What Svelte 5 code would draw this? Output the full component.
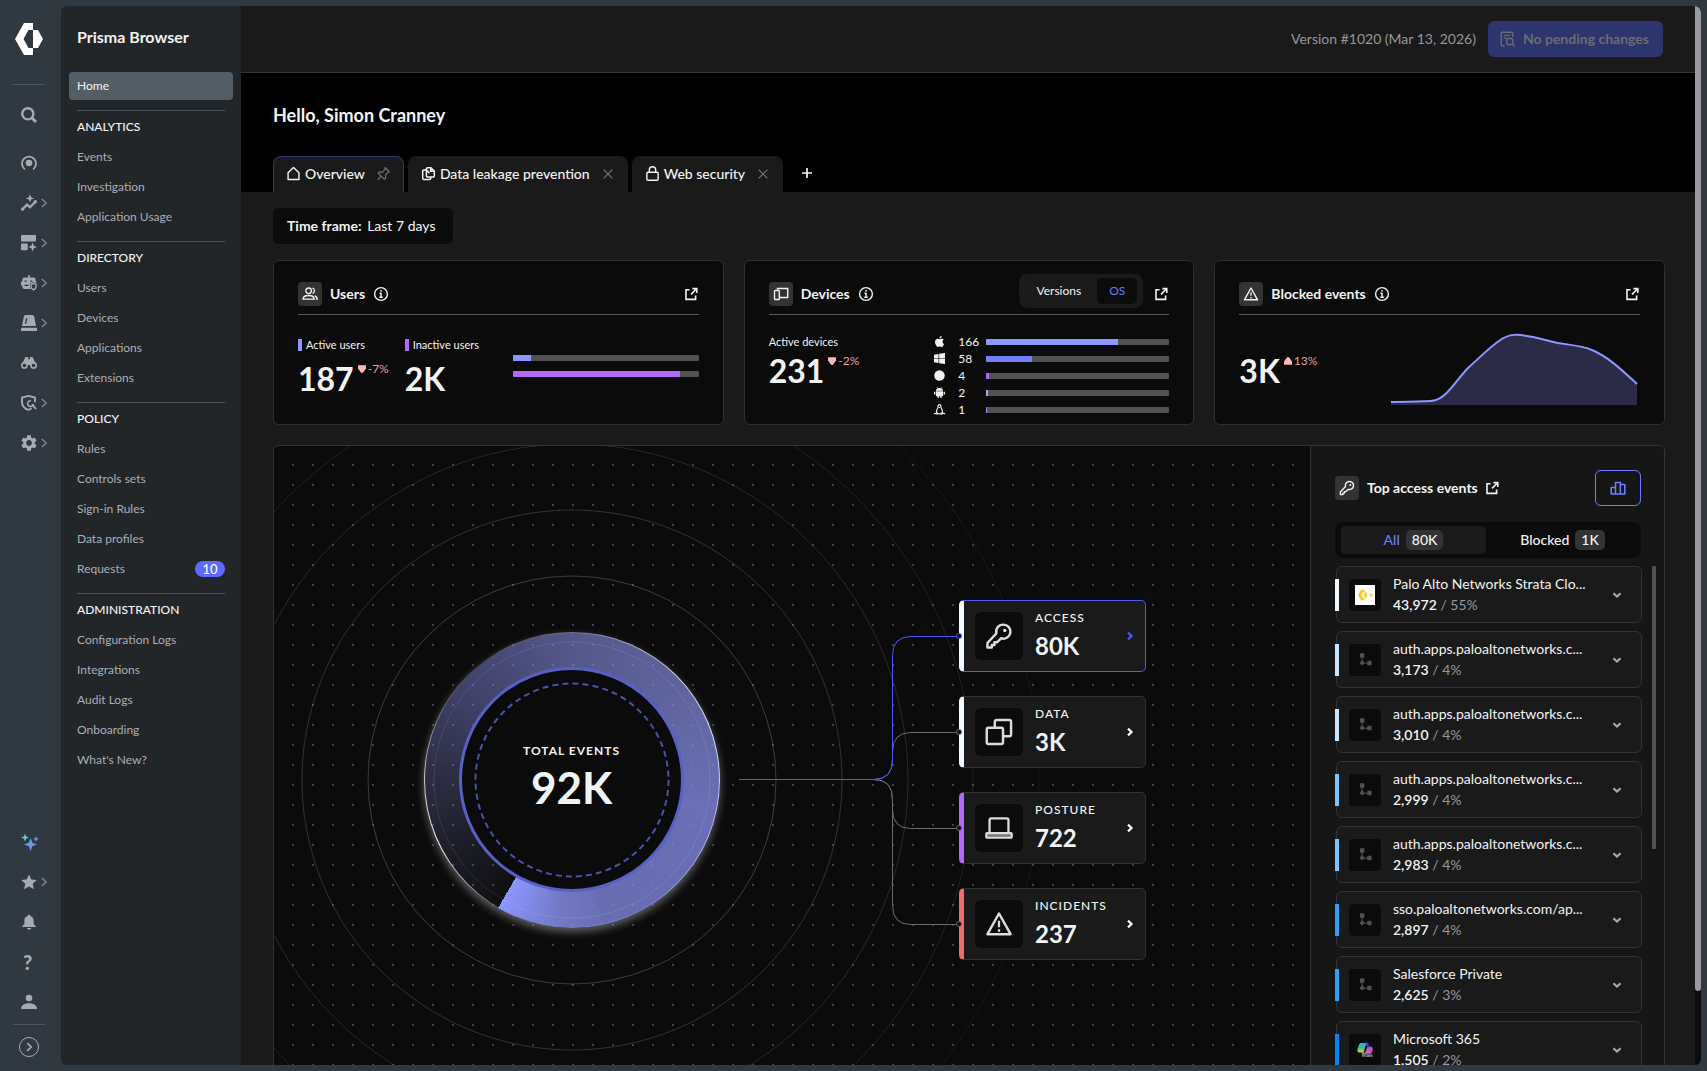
<script lang="ts">
	type NavSection = { title: string; items: { label: string; badge?: number }[] };
	type EventRow = { name: string; count: string; share: string; color: string; logo: string };

	const star = (x: number, y: number, r: number) =>
		`M${x} ${y - r}L${x + r * 0.28} ${y - r * 0.28}L${x + r} ${y}L${x + r * 0.28} ${y + r * 0.28}L${x} ${y + r}L${x - r * 0.28} ${y + r * 0.28}L${x - r} ${y}L${x - r * 0.28} ${y - r * 0.28}Z`;

	// all icons live on a 16x16 grid
	const icons: Record<string, string> = {
		search: '<circle cx="6.8" cy="6.8" r="5.6" fill="none" stroke="currentColor" stroke-width="2.4"/><path d="M11 11l4 4" stroke="currentColor" stroke-width="3"/>',
		target: '<path d="M3.8 14.2A7 7 0 1 1 12.2 14.2" fill="none" stroke="currentColor" stroke-width="1.9"/><circle cx="8" cy="8" r="3.3"/>',
		insights: `<path d="M1.5 14.3L6 9.6l3 2.6 5.4-5.4" fill="none" stroke="currentColor" stroke-width="2.3"/><circle cx="1.6" cy="14.2" r="1.6"/><circle cx="14.3" cy="6.8" r="1.7"/><path d="${star(9, 3.4, 4.2)}"/>`,
		dashboard: `<rect x="0" y="0" width="15" height="6.4" rx="1"/><rect x="0" y="8.4" width="6.8" height="6.8" rx="1"/><path d="${star(11.6, 12, 4.4)}"/>`,
		robot: '<path d="M8 0v3" stroke="currentColor" stroke-width="1.6"/><path d="M3.4 2.6h9.2A2 2 0 0 1 14.600 4.600V6h.6v2.200L12.500 7 9 8.500V11c0 1.200.4 2.200 1 3H3.400a2 2 0 0 1-2-2v-1.600H0V6.600h1.400v-2a2 2 0 0 1 2-2zM3.600 5.400v1.400h2.200V5.400zM9.200 5.400v1.400h2.200V5.400zM3.600 9.800v1.300h4V9.800z" fill-rule="evenodd"/><path d="M12.600 8.300l2.500 1v2c0 1.700-1 2.900-2.500 3.500-1.500-.6-2.500-1.800-2.500-3.500v-2z" fill="none" stroke="currentColor" stroke-width="1.300"/>',
		siren: '<path d="M4.600 0h6.400c1.300 0 2 .8 2.300 1.900L15 11H1l1.700-9.100C3 .8 3.500 0 4.600 0zM5 3.200L3.900 9h1.300l1.200-5.800z" fill-rule="evenodd"/><rect x="0" y="12.800" width="16" height="3.200" rx=".6"/>',
		binoculars: '<path d="M4.400 2h2.700v2.300h1.800V2h2.700l3.300 7-2.600-.7L9.800 10H6.200L3.700 8.300 1.100 9z"/><circle cx="3.400" cy="10.400" r="2.600" fill="none" stroke="currentColor" stroke-width="1.600"/><circle cx="12.600" cy="10.400" r="2.600" fill="none" stroke="currentColor" stroke-width="1.600"/>',
		shield: '<path d="M7.600 15C3.600 13.600 1 11 1 7V2.600L7.500.9 14 2.600v4.600" fill="none" stroke="currentColor" stroke-width="1.900"/><path d="M10 5.700A2.900 2.900 0 1 0 12.400 9" fill="none" stroke="currentColor" stroke-width="1.500"/><path d="M11 9.300l4 4.700M7.600 15l3-1.800" stroke="currentColor" stroke-width="1.900"/>',
		gear: '<path transform="translate(-1.600 -1.600) scale(.8)" d="M19.14 12.94c.04-.3.06-.61.06-.94 0-.32-.02-.64-.07-.94l2.03-1.58c.18-.14.23-.41.12-.61l-1.92-3.32c-.12-.22-.37-.29-.59-.22l-2.39.96c-.5-.38-1.030-.7-1.620-.94l-.36-2.540c-.04-.24-.24-.41-.48-.41h-3.840c-.24 0-.43.17-.47.41l-.36 2.540c-.59.24-1.130.57-1.620.94l-2.390-.96c-.22-.08-.47 0-.59.22L2.740 8.870c-.12.21-.08.47.12.61l2.030 1.580c-.05.3-.09.63-.09.94s.02.64.07.94l-2.030 1.580c-.18.14-.23.41-.12.61l1.920 3.320c.12.22.37.29.59.22l2.390-.96c.5.38 1.030.7 1.620.94l.36 2.540c.05.24.24.41.48.41h3.840c.24 0 .44-.17.47-.41l.36-2.540c.59-.24 1.130-.56 1.620-.94l2.390.96c.22.08.47 0 .59-.22l1.920-3.320c.12-.22.07-.47-.12-.61zM12 15.600c-1.980 0-3.600-1.620-3.600-3.600s1.620-3.600 3.600-3.600 3.600 1.620 3.600 3.600-1.620 3.600-3.600 3.600z"/>',
		sparkles: `<defs><linearGradient id="spark" x1="0" x2="1" y1="0" y2="1"><stop offset="0" stop-color="#3fc8f4"/><stop offset="1" stop-color="#8f6be8"/></linearGradient></defs><path fill="#4fc9f0" d="${star(4, 3.6, 4)}"/><path fill="#7c8cf0" d="${star(15, 5, 3)}"/><path fill="url(#spark)" d="${star(9.600, 10.500, 6.400)}"/>`,
		star: '<path d="M8 .4l2.300 5 5.500.6-4.100 3.700 1.200 5.500L8 12.400l-4.900 2.800 1.200-5.500L.2 6l5.500-.6z"/>',
		bell: '<path d="M8 .8c.8 0 1.300.5 1.400 1.200 2 .6 3.200 2.200 3.200 4.400V10l2.200 2.200v.8H1.200v-.8L3.400 10V6.400c0-2.200 1.200-3.800 3.200-4.400C6.700 1.300 7.200.8 8 .8zM6 14h4.200c-.2 1-1 1.600-2.100 1.600S6.200 15 6 14z"/>',
		person: '<circle cx="8" cy="4" r="3.300"/><path d="M0 15c0-3.600 3-5.800 8-5.800s8 2.200 8 5.800z"/>',
		chevron: '<path d="M5.500 3.500L10.500 8l-5 4.500" fill="none" stroke="currentColor" stroke-width="1.700"/>',
		next: '<path d="M6 4.600L9.500 8 6 11.400" fill="none" stroke="currentColor" stroke-width="2.200"/>',
		down: '<path d="M4.400 6.200L8 9.600l3.600-3.400" fill="none" stroke="currentColor" stroke-width="2.200"/>',
		expand: '<path d="M6.200 4.200L10.200 8l-4 3.800" fill="none" stroke="currentColor" stroke-width="1.600"/>',
		home: '<path d="M2.200 7.200L8 1.600l5.800 5.600v7.200H2.200z" fill="none" stroke="currentColor" stroke-width="1.500" stroke-linejoin="round"/>',
		pin: '<path d="M9.600 1.600l4.800 4.600-1.600.4-2.700 3.200.2 3.200-1.500 1.200L2.200 7.600l1.400-1.200 3.300.2L9.700 3.600zM5.500 10.800L1.800 14.800" fill="none" stroke="currentColor" stroke-width="1.200" stroke-linejoin="round"/>',
		files: '<path d="M10.500 1.800H7a1.200 1.200 0 0 0-1.200 1.200v7.500A1.200 1.200 0 0 0 7 11.700h6a1.200 1.200 0 0 0 1.200-1.200V5.400zM10.300 1.800v3.800h3.800" fill="none" stroke="currentColor" stroke-width="1.600"/><path d="M5.800 4.300H3a1.200 1.200 0 0 0-1.200 1.200v7.600A1.200 1.200 0 0 0 3 14.300h6.200a1.200 1.200 0 0 0 1.200-1.200v-1.400M5.800 4.300L9 7.600" fill="none" stroke="currentColor" stroke-width="1.600"/>',
		lock: '<rect x="2" y="6.600" width="12" height="8.600" rx="1.200" fill="none" stroke="currentColor" stroke-width="1.500"/><path d="M4.600 6.600V4.200a3.400 3.400 0 0 1 6.800 0v2.400" fill="none" stroke="currentColor" stroke-width="1.500"/>',
		close: '<path d="M3 3l10 10M13 3L3 13" fill="none" stroke="currentColor" stroke-width="1.300"/>',
		plus: '<path d="M8 3v10M3 8h10" fill="none" stroke="currentColor" stroke-width="1.700"/>',
		review: '<path d="M4.500 14.800H2.200a1 1 0 0 1-1-1V2.200a1 1 0 0 1 1-1h9.600a1 1 0 0 1 1 1v3.600M4 4.400h6M4 7h2.500" fill="none" stroke="currentColor" stroke-width="1.400"/><circle cx="9.800" cy="10.400" r="3.200" fill="none" stroke="currentColor" stroke-width="1.400"/><path d="M12 12.800l2.600 2.600" stroke="currentColor" stroke-width="1.500"/>',
		users: '<circle cx="6.600" cy="4.800" r="2.800" fill="none" stroke="currentColor" stroke-width="1.300"/><path d="M1 13.200c0-2.500 2-3.700 5.600-3.700s5.600 1.200 5.600 3.700zM10.400 2.200c2.700.5 2.700 4.500 0 5.100M12.600 9.900c1.700.5 2.600 1.600 2.600 3.300h-1.400" fill="none" stroke="currentColor" stroke-width="1.300"/>',
		devices: '<path d="M4.500 3.800V2.500h10.200v9H6.500" fill="none" stroke="currentColor" stroke-width="1.400"/><rect x="1.500" y="4.500" width="4.800" height="9" rx=".8" fill="none" stroke="currentColor" stroke-width="1.400"/>',
		warning: '<path d="M8 2l6.600 11.800H1.400z" fill="none" stroke="currentColor" stroke-width="1.400" stroke-linejoin="round"/><path d="M8 6.200v3.600M8 11v1.400" stroke="currentColor" stroke-width="1.300"/>',
		info: '<circle cx="8" cy="8" r="6.400" fill="none" stroke="currentColor" stroke-width="1.400"/><path d="M6.500 7.200H8v3.600M6.300 11.200h3.500M7.200 4.800h1.600" fill="none" stroke="currentColor" stroke-width="1.400"/>',
		open: '<path d="M6.600 3.800H3v9.600h9.600V9.600M9.400 2.600h4.400V7M13.400 3L8 8.400" fill="none" stroke="currentColor" stroke-width="1.600"/>',
		key: '<path d="M10.400 1.500a4 4 0 0 0-3.900 5L1.400 12v2.600h2.500v-1.500h1.500v-1.500h1.400L9.300 9.300a4 4 0 1 0 1.100-7.800z" fill="none" stroke="currentColor" stroke-width="1.400" stroke-linejoin="round"/><circle cx="11.300" cy="4.900" r="1"/>',
		copy: '<rect x="1" y="5.600" width="9.300" height="9.300" rx="1" fill="none" stroke="currentColor" stroke-width="1.400"/><path d="M5.600 5.600V2.100a1 1 0 0 1 1-1h7.300a1 1 0 0 1 1 1v7.300a1 1 0 0 1-1 1h-3.600" fill="none" stroke="currentColor" stroke-width="1.400"/>',
		laptop: '<path d="M2.600 11V3.400a.9.900 0 0 1 .9-.9h9a.9.900 0 0 1 .9.900V11" fill="none" stroke="currentColor" stroke-width="1.300"/><rect x=".7" y="10.900" width="14.600" height="2.700" rx=".5" fill="#77777a" stroke="currentColor" stroke-width="1.200"/>',
		chart: '<path d="M5.500 14V2.500h4.800V14M5.500 7.500H1.200V14h13.600V4.500h-4.500M10.300 14V8" fill="none" stroke="currentColor" stroke-width="1.600" stroke-linejoin="round"/>',
		app: '<rect x="2" y="1.200" width="4.800" height="4.800" rx=".8"/><path d="M4.400 5.500V12H11" fill="none" stroke="currentColor" stroke-width="1"/><path d="M4.400 8.600L7.300 11.600 4.400 14.500 1.500 11.600z"/><rect x="9.800" y="9.300" width="4.700" height="4.700" rx="1"/>',
		apple: '<path transform="scale(.667)" d="M12.152 6.896c-.948 0-2.415-1.078-3.960-1.040-2.040.027-3.910 1.183-4.961 3.014-2.117 3.675-.546 9.103 1.519 12.090 1.013 1.454 2.208 3.090 3.792 3.039 1.520-.065 2.090-.987 3.935-.987 1.831 0 2.350.987 3.960.948 1.637-.026 2.676-1.480 3.676-2.948 1.156-1.688 1.636-3.325 1.662-3.415-.039-.013-3.182-1.221-3.220-4.857-.026-3.040 2.480-4.494 2.597-4.559-1.429-2.090-3.623-2.324-4.390-2.376-2-.156-3.675 1.090-4.610 1.090zM15.530 3.830c.843-1.012 1.400-2.427 1.245-3.830-1.207.052-2.662.805-3.532 1.818-.78.896-1.454 2.338-1.273 3.714 1.338.104 2.715-.688 3.559-1.701"/>',
		windows: '<path d="M0 2.400L6.600 1.300v6.200H0zM7.500 1.200L16 0v7.500H7.500zM0 8.500h6.600v6.200L0 13.600zM7.500 8.500H16V16l-8.500-1.200z"/>',
		circle: '<circle cx="8" cy="8" r="7.600"/>',
		android: '<path d="M2.800 5.400C3 3 5 1.500 8 1.500s5 1.500 5.200 3.900zM2.800 6.300h10.400v6a1 1 0 0 1-1 1H3.800a1 1 0 0 1-1-1z"/><path d="M1 7v4M15 7v4M6 12.500V16M10 12.500V16" stroke="currentColor" stroke-width="1.900"/><path d="M4.500.2l1 1.800M11.500.2l-1 1.800" stroke="currentColor"/>',
		linux: '<path d="M8 .8C6.200.8 5.800 2.200 6 4.300 6 6 3.600 8 3.600 11.400c0 1.800 1.800 3 4.400 3s4.400-1.200 4.400-3C12.400 8 10 6 10 4.300 10.200 2.200 9.800.8 8 .8z" fill="none" stroke="currentColor" stroke-width="1.700"/><path d="M0 14.800c2-2 4-1 5 .6M16 14.800c-2-2-4-1-5 .6M7 5h2" fill="none" stroke="currentColor" stroke-width="1.600"/>'
	};

	const railTop = [
		{ icon: 'target', label: 'Command center', more: false },
		{ icon: 'insights', label: 'Insights', more: true },
		{ icon: 'dashboard', label: 'Dashboards', more: true },
		{ icon: 'robot', label: 'AI security', more: true },
		{ icon: 'siren', label: 'Incidents and alerts', more: true },
		{ icon: 'binoculars', label: 'Activity', more: false },
		{ icon: 'shield', label: 'Posture', more: true },
		{ icon: 'gear', label: 'Settings', more: true }
	];

	const sections: NavSection[] = [
		{ title: 'ANALYTICS', items: [{ label: 'Events' }, { label: 'Investigation' }, { label: 'Application Usage' }] },
		{ title: 'DIRECTORY', items: [{ label: 'Users' }, { label: 'Devices' }, { label: 'Applications' }, { label: 'Extensions' }] },
		{
			title: 'POLICY',
			items: [{ label: 'Rules' }, { label: 'Controls sets' }, { label: 'Sign-in Rules' }, { label: 'Data profiles' }, { label: 'Requests', badge: 10 }]
		},
		{
			title: 'ADMINISTRATION',
			items: [{ label: 'Configuration Logs' }, { label: 'Integrations' }, { label: 'Audit Logs' }, { label: 'Onboarding' }, { label: "What's New?" }]
		}
	];

	const systems = [
		{ icon: 'apple', name: 'macOS', count: 166, color: '#8c97ff' },
		{ icon: 'windows', name: 'Windows', count: 58, color: '#7180ff' },
		{ icon: 'circle', name: 'ChromeOS', count: 4, color: '#b069f8' },
		{ icon: 'android', name: 'Android', count: 2, color: '#c79bfb' },
		{ icon: 'linux', name: 'Linux', count: 1, color: '#8c97ff' }
	];
	const deviceTotal = 231;

	const nodes = [
		{ icon: 'key', label: 'ACCESS', value: '80K', tone: 'access', y: 190 },
		{ icon: 'copy', label: 'DATA', value: '3K', tone: 'data', y: 286 },
		{ icon: 'laptop', label: 'POSTURE', value: '722', tone: 'posture', y: 382 },
		{ icon: 'warning', label: 'INCIDENTS', value: '237', tone: 'incidents', y: 478 }
	];

	const rings = [
		{ r: 138, opacity: 0.09 },
		{ r: 204, opacity: 0.2 },
		{ r: 270, opacity: 0.16 },
		{ r: 336, opacity: 0.12 },
		{ r: 401, opacity: 0.09 },
		{ r: 467, opacity: 0.06 }
	];

	const events: EventRow[] = [
		{ name: 'Palo Alto Networks Strata Clo...', count: '43,972', share: '55%', color: '#f2f8ff', logo: 'palo' },
		{ name: 'auth.apps.paloaltonetworks.c...', count: '3,173', share: '4%', color: '#c8e6ff', logo: 'app' },
		{ name: 'auth.apps.paloaltonetworks.c...', count: '3,010', share: '4%', color: '#c8e6ff', logo: 'app' },
		{ name: 'auth.apps.paloaltonetworks.c...', count: '2,999', share: '4%', color: '#7dc3ff', logo: 'app' },
		{ name: 'auth.apps.paloaltonetworks.c...', count: '2,983', share: '4%', color: '#7dc3ff', logo: 'app' },
		{ name: 'sso.paloaltonetworks.com/ap...', count: '2,897', share: '4%', color: '#329dfb', logo: 'app' },
		{ name: 'Salesforce Private', count: '2,625', share: '3%', color: '#329dfb', logo: 'app' },
		{ name: 'Microsoft 365', count: '1,505', share: '2%', color: '#0b85f3', logo: 'm365' }
	];

	let deviceView = $state('OS');
	let eventView = $state('All');
	let selected = $state('ACCESS');

	const linkPath = (y: number) => {
		const dir = y < 334 ? -1 : 1;
		return `M600 333.5Q618.5 333.5 618.5 ${333.5 + 20 * dir}V${y - 19 * dir + 0.5}Q618.5 ${y + 0.5} 637 ${y + 0.5}H682`;
	};
</script>

{#snippet icon(name: string, size = 16)}
	<svg class="icon" width={size} height={size} viewBox="0 0 16 16" fill="currentColor" aria-hidden="true">{@html icons[name]}</svg>
{/snippet}

{#snippet trend(dir: string, value: string)}
	<span class="trend">
		<svg width="8" height="8" viewBox="0 0 8 8" aria-hidden="true">
			<path d={dir === 'up' ? 'M2.500 1Q4-.8 5.500 1L8 4.500V7.800H0V4.500Z' : 'M2.500 7Q4 8.800 5.500 7L8 3.500V.2H0V3.500Z'} fill="#ffb8b5" />
		</svg>
		{value}
	</span>
{/snippet}

{#snippet cardTitle(name: string, title: string)}
	<span class="tile">{@render icon(name)}</span>
	<h2>{title}</h2>
	<button class="plain" aria-label="About {title}">{@render icon('info')}</button>
{/snippet}

<div class="shell">
	<nav class="rail" aria-label="Products">
		<a class="logo" href="#home" aria-label="Strata Cloud Manager">
			<svg width="28" height="32" viewBox="0 0 28 32" aria-hidden="true">
				<path d="M9 0h9v7h-4.500L8.500 16l5 9H18v7H9L0 16z" fill="#fff" />
				<path d="M18 7h5l5 9-5 9h-5z" fill="#fff" />
			</svg>
		</a>
		<hr />
		<button class="rail-item search" aria-label="Search">{@render icon('search')}</button>
		{#each railTop as item}
			<button class="rail-item" aria-label={item.label}>
				{@render icon(item.icon)}
				{#if item.more}<span class="more">{@render icon('chevron', 14)}</span>{/if}
			</button>
		{/each}
		<div class="rail-bottom">
			<button class="rail-item" aria-label="Copilot">{@render icon('sparkles')}</button>
			<button class="rail-item" aria-label="Favorites">
				{@render icon('star')}
				<span class="more">{@render icon('chevron', 14)}</span>
			</button>
			<button class="rail-item" aria-label="Notifications">{@render icon('bell')}</button>
			<button class="rail-item help" aria-label="Help">?</button>
			<button class="rail-item" aria-label="Account">{@render icon('person')}</button>
			<hr />
			<button class="rail-item expand" aria-label="Expand menu"><span>{@render icon('expand', 16)}</span></button>
		</div>
	</nav>

	<aside class="sidebar">
		<h1>Prisma Browser</h1>
		<a class="home" href="#home">Home</a>
		{#each sections as section}
			<section>
				<h2>{section.title}</h2>
				{#each section.items as item}
					<a href="#nav">
						{item.label}
						{#if item.badge}<span class="badge">{item.badge}</span>{/if}
					</a>
				{/each}
			</section>
		{/each}
	</aside>

	<main>
		<header>
			<span class="version">Version #1020 (Mar 13, 2026)</span>
			<button class="pending" disabled>{@render icon('review')}No pending changes</button>
		</header>

		<div class="hero">
			<h1>Hello, Simon Cranney</h1>
			<div class="tabs">
				<button class="tab active">{@render icon('home', 15)}Overview<span class="dim">{@render icon('pin', 15)}</span></button>
				<button class="tab">{@render icon('files', 15)}Data leakage prevention<span class="dim">{@render icon('close', 14)}</span></button>
				<button class="tab">{@render icon('lock', 15)}Web security<span class="dim">{@render icon('close', 14)}</span></button>
				<button class="add" aria-label="Add tab">{@render icon('plus')}</button>
			</div>
		</div>

		<div class="content">
			<button class="timeframe"><b>Time frame:</b> Last 7 days</button>

			<div class="cards">
				<article class="card">
					<div class="card-head">
						{@render cardTitle('users', 'Users')}
						<a class="open" href="#users" aria-label="Open users">{@render icon('open')}</a>
					</div>
					<div class="card-body">
						<div class="stat tall">
							<span class="label"><i class="mark active-users"></i>Active users</span>
							<div class="value">187{@render trend('down', '-7%')}</div>
						</div>
						<div class="stat tall">
							<span class="label"><i class="mark inactive-users"></i>Inactive users</span>
							<div class="value">2K</div>
						</div>
						<div class="bars">
							<div class="track"><div class="fill active-users" style="width: 10%"></div></div>
							<div class="track"><div class="fill inactive-users" style="width: 90%"></div></div>
						</div>
					</div>
				</article>

				<article class="card">
					<div class="card-head">
						{@render cardTitle('devices', 'Devices')}
						<div class="switch">
							{#each ['Versions', 'OS'] as view}
								<button class:on={deviceView === view} onclick={() => (deviceView = view)}>{view}</button>
							{/each}
						</div>
						<a class="open" href="#devices" aria-label="Open devices">{@render icon('open')}</a>
					</div>
					<div class="card-body">
						<div class="stat">
							<span class="label">Active devices</span>
							<div class="value">231{@render trend('down', '-2%')}</div>
						</div>
						<ul class="systems">
							{#each systems as os}
								<li title={os.name}>
									{@render icon(os.icon, 11)}
									<span>{os.count}</span>
									<div class="track"><div class="fill" style="width: {(os.count / deviceTotal) * 100}%; background: {os.color}"></div></div>
								</li>
							{/each}
						</ul>
					</div>
				</article>

				<article class="card">
					<div class="card-head">
						{@render cardTitle('warning', 'Blocked events')}
						<a class="open" href="#blocked" aria-label="Open blocked events">{@render icon('open')}</a>
					</div>
					<div class="card-body">
						<div class="stat lone">
							<div class="value">3K{@render trend('up', '13%')}</div>
						</div>
						<svg class="area" viewBox="0 0 247 72" preserveAspectRatio="none" aria-hidden="true">
							<path d="M0 69C20 68.500 35 69 43 67.500C56 65 65 47 78 34C85 28 100 13 108 8C118 0 128 1 142 4C152 6 158 8 167 10C180 12 192 13 201 17C218 24 234 40 246 51V72H0Z" fill="#2b2b48" />
							<path d="M0 69C20 68.500 35 69 43 67.500C56 65 65 47 78 34C85 28 100 13 108 8C118 0 128 1 142 4C152 6 158 8 167 10C180 12 192 13 201 17C218 24 234 40 246 51" fill="none" stroke="#8c97ff" stroke-width="2" />
						</svg>
					</div>
				</article>
			</div>

			<div class="explorer">
				<div class="canvas">
					<div class="donut"><div class="donut-band"></div></div>
					<svg class="layer" aria-hidden="true">
						<defs>
							<pattern id="dots" width="20" height="20" patternUnits="userSpaceOnUse">
								<rect x="18" y="18" width="2" height="2" fill="#8888b8" fill-opacity=".42" />
							</pattern>
						</defs>
						<rect width="100%" height="100%" fill="url(#dots)" />
						{#each rings as ring}
							<circle cx="298" cy="334" r={ring.r} fill="none" stroke="#fff" stroke-opacity={ring.opacity} />
						{/each}
					</svg>
					<div class="core">
						<svg class="dashes" viewBox="0 0 200 200" aria-hidden="true">
							<circle cx="100" cy="100" r="96.500" fill="none" stroke="#4a52ab" stroke-width="2" stroke-dasharray="6 4.100" />
						</svg>
						<span class="caps">TOTAL EVENTS</span>
						<strong>92K</strong>
					</div>
					<svg class="layer" aria-hidden="true">
						{#each nodes as node}
							{#if node.label !== selected}
								<path d={linkPath(node.y)} fill="none" stroke="#6a6a6a" />
							{/if}
						{/each}
						{#each nodes as node}
							{#if node.label === selected}
								<path d={`M465 333.5H600${linkPath(node.y)}`} fill="none" stroke="#4a5af8" />
							{/if}
						{/each}
					</svg>
					<div class="nodes">
						{#each nodes as node}
							<button class="node {node.tone}" class:selected={node.label === selected} onclick={() => (selected = node.label)}>
								<i class="port"></i>
								<span class="node-icon">{@render icon(node.icon, 28)}</span>
								<span class="node-text">
									<span class="caps">{node.label}</span>
									<strong>{node.value}</strong>
								</span>
								{@render icon('next')}
							</button>
						{/each}
					</div>
				</div>

				<div class="side">
					<div class="side-head">
						<span class="tile">{@render icon('key')}</span>
						<h2>Top access events</h2>
						<a class="plain" href="#events" aria-label="Open access events">{@render icon('open')}</a>
						<button class="chart-button" aria-label="Show chart">{@render icon('chart')}</button>
					</div>
					<div class="segment">
						{#each [['All', '80K'], ['Blocked', '1K']] as [name, count]}
							<button class:on={eventView === name} onclick={() => (eventView = name)}>{name}<span>{count}</span></button>
						{/each}
					</div>
					<div class="event-scroll">
						<ul class="events">
							{#each events as event}
								<li>
									<i class="tick" style="background: {event.color}"></i>
									<span class="app-logo">
										{#if event.logo === 'palo'}
											<svg width="20" height="20" viewBox="0 0 20 20" aria-hidden="true">
												<path d="M0 0h20v20H0z" fill="#fff" />
												<path d="M6 4.800h3.500v2H8L6.500 10 8 13.200h1.500v2H6L3.200 10zM9.500 6.800h1L12.500 10l-2 3.200h-1z" fill="#fcc917" />
												<path d="M16 7.800l1.900 1.100v2.200L16 12.200l-1.900-1.100V8.900z" fill="#fbdc7b" />
											</svg>
										{:else if event.logo === 'm365'}
											<svg width="16" height="16" viewBox="0 0 16 16" aria-hidden="true">
												<defs>
													<linearGradient id="m-left" x1="0" y1="0" x2="0" y2="1">
														<stop offset="0" stop-color="#3b9cf0" />
														<stop offset=".5" stop-color="#35c08b" />
														<stop offset="1" stop-color="#f0d020" />
													</linearGradient>
													<linearGradient id="m-right" x1="0" y1="0" x2="0" y2="1">
														<stop offset="0" stop-color="#a050e8" />
														<stop offset="1" stop-color="#f0609a" />
													</linearGradient>
												</defs>
												<path d="M4 1h5.500L6.500 10.500H2.500C.5 10.500 0 9 .6 7L2 2.800C2.400 1.600 3 1 4 1z" fill="url(#m-left)" />
												<path d="M8 .6h1.500c1 0 1.700.5 2 1.600L12 4H9.500z" fill="#2b4fe0" />
												<path d="M10.500 4.500h3c2 0 2.600 1.400 2.100 3.200l-.8 2.600c-.3 1-1 1.500-2 1.500H7.500z" fill="url(#m-right)" />
												<path d="M4 10.500h3.500L8 12H5.500z" fill="#f08a3c" />
												<text x="5" y="15" font-size="4" fill="#fff">M365</text>
											</svg>
										{:else}
											{@render icon('app', 15)}
										{/if}
									</span>
									<span class="event-text">
										<span>{event.name}</span>
										<span class="figures"><b>{event.count}</b> / {event.share}</span>
									</span>
									<button class="plain" aria-label="Expand {event.name}">{@render icon('down')}</button>
								</li>
							{/each}
						</ul>
						<div class="event-bar"></div>
					</div>
				</div>
			</div>
		</div>
	</main>
	<div class="page-bar"><div></div></div>
</div>

<style>
	:global(body) {
		margin: 0;
		background: #303840;
	}

	.shell {
		box-sizing: border-box;
		display: flex;
		height: 100vh;
		padding: 6px 6px 6px 0;
		overflow: hidden;
		background: #303840;
		color: #f2f4f4;
		font-family: Lato, 'Open Sans', sans-serif;
		font-size: 14px;
		line-height: 20px;
	}

	.shell :global(*) {
		box-sizing: border-box;
	}

	button {
		padding: 0;
		border: 0;
		background: none;
		color: inherit;
		font: inherit;
		cursor: pointer;
	}

	a {
		color: inherit;
		text-decoration: none;
	}

	h1,
	h2,
	ul {
		margin: 0;
		padding: 0;
		list-style: none;
	}

	.icon {
		display: block;
		flex: none;
		overflow: visible;
	}

	.rail {
		display: flex;
		flex: none;
		flex-direction: column;
		width: 61px;
		color: #a5abb2;
	}

	.rail hr {
		flex: none;
		width: 32px;
		height: 1px;
		margin: 0 0 0 13px;
		border: 0;
		background: #4d565f;
	}

	.logo {
		height: 61px;
		margin: 17px 0 0 15px;
	}

	.rail-item {
		display: flex;
		flex: none;
		align-items: center;
		height: 40px;
		padding-left: 21px;
	}

	.rail-item.search {
		margin: 10px 0 8px;
	}

	.more {
		color: #7b848d;
	}

	.rail-bottom {
		display: flex;
		flex-direction: column;
		margin-top: auto;
	}

	.rail-bottom hr {
		margin-top: 2px;
	}

	.rail-item.help {
		padding-left: 23px;
		font-size: 20px;
		font-weight: 900;
	}

	.rail-item.expand {
		padding-top: 4px;
		padding-left: 19px;
	}

	.expand span {
		display: grid;
		place-items: center;
		width: 20px;
		height: 20px;
		border: 1px solid #a5abb2;
		border-radius: 50%;
	}

	.sidebar {
		flex: none;
		width: 180px;
		padding: 0 8px;
		border-radius: 6px 0 0 6px;
		background: #222629;
		font-size: 12px;
	}

	.sidebar h1 {
		padding: 20px 8px 24px;
		font-size: 16px;
		font-weight: 700;
		line-height: 22px;
	}

	.home {
		display: block;
		margin-bottom: 10px;
		padding: 0 8px;
		border-radius: 4px;
		background: #535d65;
		line-height: 28px;
	}

	.sidebar section {
		margin: 0 8px;
		padding: 1px 0 9px;
		border-top: 1px solid #4b5358;
	}

	.sidebar h2 {
		font-size: 12px;
		font-weight: 500;
		line-height: 30px;
	}

	.sidebar section a {
		display: flex;
		align-items: center;
		justify-content: space-between;
		color: #a9aeb8;
		line-height: 30px;
	}

	.badge {
		width: 30px;
		border-radius: 8px;
		background: #5c6bff;
		color: #fff;
		font-size: 13px;
		font-weight: 500;
		line-height: 16px;
		text-align: center;
	}

	main {
		flex: 1;
		min-width: 0;
		overflow: hidden;
		background: #1a1a1a;
	}

	header {
		display: flex;
		align-items: center;
		justify-content: flex-end;
		gap: 12px;
		height: 67px;
		padding: 0 32px 0 0;
		border-bottom: 1px solid #333;
	}

	.version {
		color: #96979e;
	}

	.pending {
		display: flex;
		align-items: center;
		gap: 7px;
		height: 36px;
		padding: 0 14px 0 12px;
		border-radius: 6px;
		background: #2d356c;
		color: #6a6b73;
		font-weight: 700;
	}

	.hero {
		padding: 30px 32px 0;
		background: #000;
	}

	.hero h1 {
		margin-bottom: 29px;
		font-size: 18px;
		font-weight: 700;
		line-height: 24px;
	}

	.tabs {
		display: flex;
		gap: 4px;
	}

	.tab {
		display: flex;
		align-items: center;
		gap: 4px;
		height: 36px;
		padding: 0 12px 2px;
		border: 1px solid #1a1a1a;
		border-bottom: 0;
		border-radius: 8px 8px 0 0;
		background: #1a1a1a;
		font-weight: 500;
	}

	.tab.active {
		border-color: #2c3676;
	}

	.dim {
		margin-left: 7px;
		color: #77787c;
	}

	.add {
		display: grid;
		place-items: center;
		width: 40px;
		padding-bottom: 2px;
	}

	.content {
		padding: 16px 30px 32px 32px;
	}

	.timeframe {
		height: 36px;
		padding: 0 18px 0 14px;
		border-radius: 6px;
		background: #0b0b0b;
	}

	.timeframe b {
		margin-right: 2px;
		font-weight: 700;
	}

	.cards {
		display: grid;
		grid-template-columns: repeat(3, minmax(0, 1fr));
		gap: 20px;
		margin: 16px 0 20px;
	}

	.card {
		min-height: 165px;
		padding: 21px 24px 0;
		border: 1px solid #2e2e2e;
		border-radius: 6px;
		background: #0b0b0b;
	}

	.card-head {
		display: flex;
		align-items: center;
		height: 33px;
		padding-bottom: 8px;
		border-bottom: 1px solid #5a5a5a;
	}

	.tile {
		display: grid;
		place-items: center;
		flex: none;
		width: 24px;
		height: 24px;
		margin-right: 8px;
		border-radius: 4px;
		background: #333;
	}

	.card h2,
	.side h2 {
		margin-right: 8px;
		font-size: 14px;
		font-weight: 700;
	}

	.open {
		margin-left: auto;
	}

	.switch {
		display: flex;
		gap: 4px;
		margin: 0 10px 6px auto;
		padding: 4px 6px;
		border-radius: 8px;
		background: #1a1a1a;
	}

	.switch + .open {
		margin-left: 0;
	}

	.switch button {
		height: 26px;
		padding: 0 12px;
		border-radius: 5px;
		font-size: 12px;
	}

	.switch .on {
		background: #0b0b0b;
		color: #6c7bff;
	}

	.card-body {
		display: flex;
		gap: 16px;
	}

	.stat {
		padding-top: 19px;
	}

	.label {
		display: flex;
		align-items: center;
		gap: 4px;
		margin-bottom: 5px;
		font-size: 11px;
		line-height: 16px;
	}

	.stat.tall {
		padding-top: 22px;
	}

	.tall .label {
		margin-bottom: 10px;
	}

	.stat.lone {
		padding-top: 40px;
	}

	.mark {
		width: 4px;
		height: 12px;
	}

	.active-users {
		background: #8c97ff;
	}

	.inactive-users {
		background: #b069f8;
	}

	.value {
		display: flex;
		gap: 4px;
		font-size: 32px;
		font-weight: 700;
		line-height: 32px;
	}

	.trend {
		display: flex;
		align-items: center;
		gap: 2px;
		height: 12px;
		color: #e3a3a0;
		font-size: 12px;
		font-weight: 400;
		line-height: 12px;
	}

	.bars {
		display: grid;
		align-content: start;
		gap: 10px;
		width: 186px;
		margin-left: auto;
		padding-top: 40px;
	}

	.track {
		flex: 1;
		height: 6px;
		border-radius: 1px;
		background: #525252;
		overflow: hidden;
	}

	.fill {
		height: 6px;
	}

	.systems {
		width: 235px;
		margin-left: auto;
		padding-top: 18px;
	}

	.systems li {
		display: flex;
		align-items: center;
		height: 17px;
	}

	.systems span {
		width: 28px;
		margin-left: 13px;
		font-size: 12px;
	}

	.area {
		width: 247px;
		height: 72px;
		margin: 18px 2px 0 auto;
	}

	.explorer {
		display: flex;
		height: 670px;
		border: 1px solid #333;
		border-radius: 6px;
		background: #0b0b0b;
		overflow: hidden;
	}

	.canvas {
		position: relative;
		flex: 1;
		overflow: hidden;
	}

	.layer {
		position: absolute;
		inset: 0;
		width: 100%;
		height: 100%;
	}

	.donut {
		position: absolute;
		top: 186px;
		left: 150px;
		width: 296px;
		height: 296px;
		padding: 1px;
		border-radius: 50%;
		background: conic-gradient(#6b6ea0 0deg, #b9b9c6 30deg, #e4e4ff 65deg, #c4c8ff 95deg, #7c83d4 150deg, #7077c8 200deg, #8c97ff 210deg, #555 210deg, #fff 245deg, #ccc 270deg, #666 300deg, #3a3a4c 320deg, #6a6a78 350deg, #6b6ea0 360deg);
		box-shadow: 0 4px 8px rgba(255, 255, 255, 0.35);
	}

	.donut-band {
		height: 100%;
		border-radius: 50%;
		background: conic-gradient(from 210deg, #101013 0deg, #1d1d28 30deg, #2c2d42 60deg, #40426a 100deg, #54588a 150deg, #5f649e 200deg, #6a6fb6 250deg, #686db2 315deg, #7278c4 335deg, #8c97ff 360deg);
	}

	.core {
		position: absolute;
		top: 221px;
		left: 185px;
		display: flex;
		flex-direction: column;
		align-items: center;
		width: 225px;
		height: 225px;
		padding-top: 73px;
		border: 3px solid #5860c6;
		border-radius: 50%;
		background: #0b0b0b;
	}

	.dashes {
		position: absolute;
		top: 10px;
		left: 10px;
		width: 200px;
		height: 200px;
	}

	.caps {
		font-size: 12px;
		font-weight: 500;
		letter-spacing: 1px;
		line-height: 16px;
	}

	.core .caps {
		font-weight: 700;
	}

	.core strong {
		margin-top: 4px;
		font-size: 44px;
		line-height: 48px;
	}

	.nodes {
		position: absolute;
		top: 154px;
		left: 685px;
		display: grid;
		gap: 24px;
	}

	.node {
		position: relative;
		display: flex;
		align-items: center;
		width: 187px;
		height: 72px;
		padding-right: 7px;
		padding-left: 11px;
		border: 1px solid #333;
		border-left: 5px solid #f2f8ff;
		border-radius: 5px;
		background: #1a1a1a;
		text-align: left;
	}

	.node.posture {
		border-left-color: #b069f8;
	}

	.node.incidents {
		border-left-color: #ee6c6c;
	}

	.node.selected {
		border-color: #4a5af8 #4a5af8 #4a5af8 #f2f8ff;
	}

	.node.selected > :global(.icon) {
		color: #4a5af8;
	}

	.port {
		position: absolute;
		top: 32px;
		left: -8px;
		width: 6px;
		height: 6px;
		border: 1px solid #6a6a6a;
		border-radius: 50%;
		background: #0b0b0b;
	}

	.selected .port {
		border-color: #4a5af8;
	}

	.node-icon {
		display: grid;
		place-items: center;
		width: 48px;
		height: 48px;
		margin-right: 12px;
		border-radius: 6px;
		background: #0b0b0b;
		color: #dcdcdc;
	}

	.node-text {
		display: grid;
		flex: 1;
		gap: 6px;
		padding-bottom: 3px;
	}

	.node-text strong {
		font-size: 24px;
		line-height: 28px;
	}

	.side {
		flex: none;
		width: 354px;
		padding: 24px 23px 0 24px;
		border-left: 1px solid #333;
		background: #161616;
	}

	.side-head {
		display: flex;
		align-items: center;
		height: 36px;
	}

	.side-head h2 {
		margin-right: 6px;
	}

	.chart-button {
		display: grid;
		place-items: center;
		width: 46px;
		height: 36px;
		margin-left: auto;
		border: 1px solid #6c7bff;
		border-radius: 6px;
		color: #6c7bff;
	}

	.segment {
		display: grid;
		grid-template-columns: 1fr 1fr;
		gap: 4px;
		height: 36px;
		margin: 16px 0 8px;
		padding: 4px 6px;
		border-radius: 8px;
		background: #0b0b0b;
	}

	.segment button {
		border-radius: 4px;
		font-weight: 500;
	}

	.segment .on {
		background: #1a1a1a;
		color: #6c7bff;
	}

	.segment button span {
		display: inline-block;
		margin-left: 6px;
		padding: 0 6px;
		border-radius: 5px;
		background: #333;
		color: #f2f4f4;
	}

	.event-scroll {
		display: flex;
		gap: 10px;
		margin-right: -15px;
		margin-left: 1px;
	}

	.events {
		display: grid;
		flex: 1;
		gap: 8px;
		min-width: 0;
	}

	.events li {
		display: flex;
		align-items: center;
		height: 57px;
		padding-right: 16px;
		border: 1px solid #333;
		border-radius: 6px;
		background: #1a1a1a;
	}

	.tick {
		width: 4px;
		height: 32px;
		margin-left: -2px;
	}

	.app-logo {
		display: grid;
		place-items: center;
		flex: none;
		width: 32px;
		height: 32px;
		margin: 0 12px 0 10px;
		border-radius: 4px;
		background: #0b0b0b;
		color: #505050;
	}

	.event-text {
		display: grid;
		flex: 1;
		gap: 1px;
		white-space: nowrap;
	}

	.figures {
		color: #96979e;
	}

	.figures b {
		color: #f2f4f4;
		font-weight: 600;
	}

	.events button {
		color: #a6a7ad;
	}

	.event-bar {
		flex: none;
		width: 4px;
		height: 283px;
		background: #525252;
	}

	.page-bar {
		flex: none;
		width: 6px;
		border-radius: 0 6px 6px 0;
		background: #0a0d10;
		overflow: hidden;
	}

	.page-bar div {
		height: 93%;
		border-radius: 0 6px 3px 3px;
		background: #96999f;
	}
</style>
